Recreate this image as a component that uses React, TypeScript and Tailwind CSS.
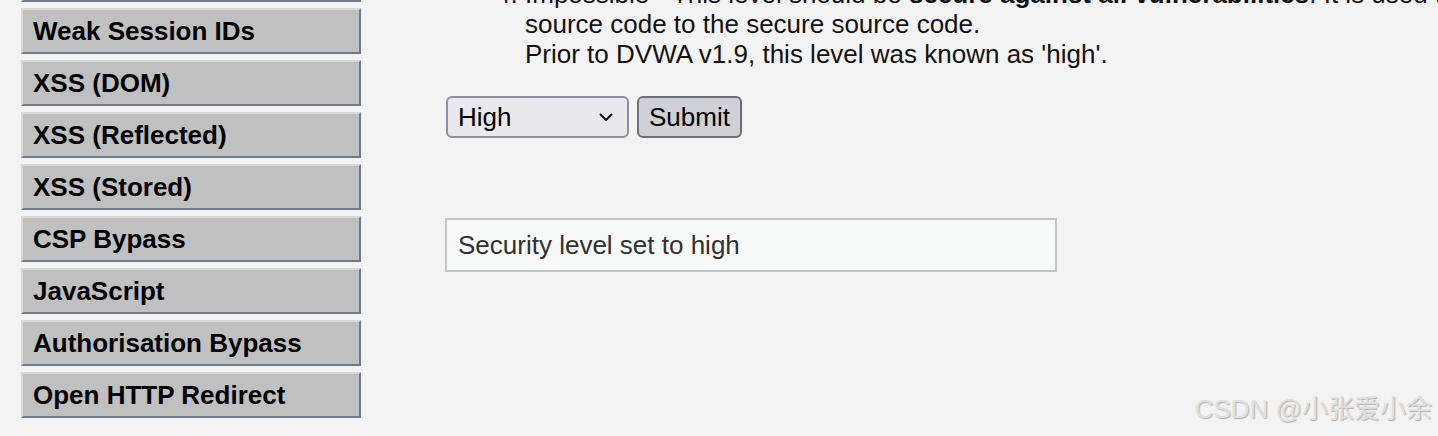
import React from "react";

const items = [
  "Insecure CAPTCHA",
  "Weak Session IDs",
  "XSS (DOM)",
  "XSS (Reflected)",
  "XSS (Stored)",
  "CSP Bypass",
  "JavaScript",
  "Authorisation Bypass",
  "Open HTTP Redirect",
];

export default function App() {
  return (
    <div className="relative w-[1438px] h-[436px] overflow-hidden bg-[#f3f3f3] text-black font-['Liberation_Sans',Arial,sans-serif]">
      <div className="flex items-start">
        <div className="ml-[21px] mt-[-44px] flex w-[340px] shrink-0 flex-col gap-[6px]">
          {items.map((t) => (
            <div
              key={t}
              className="flex h-[46px] items-center border-2 border-t-[#d8d8d8] border-l-[#d8d8d8] border-r-[#6e778c] border-b-[#6e778c] bg-[#c0c0c0] pl-[10px] text-[26px] font-bold leading-none whitespace-nowrap"
            >
              {t}
            </div>
          ))}
        </div>
        <div className="ml-[84px] flex flex-col whitespace-nowrap">
          <ol start={4} className="mt-[-21px] list-decimal pl-[80px] text-[26px] leading-[30px] text-[#111]">
            <li>
              Impossible - This level should be <b>secure against all vulnerabilities</b>. It is used to compare the vulnerable
              <br />
              source code to the secure source code.
              <br />
              Prior to DVWA v1.9, this level was known as 'high'.
            </li>
          </ol>
          <div className="mt-[27px] ml-px flex gap-[8px]">
            <div className="flex h-[42px] w-[183px] items-center justify-between rounded-[6px] border-2 border-[#8f8f9d] bg-[#e9e9ed] pl-[10px] pr-[14px] text-[26px] text-black">
              <span>High</span>
              <svg width="14" height="9" viewBox="0 0 14 9" fill="none">
                <path d="M1.5 1.5 L7 7 L12.5 1.5" stroke="#111" strokeWidth="2" strokeLinecap="round" strokeLinejoin="round" />
              </svg>
            </div>
            <div className="flex h-[42px] w-[105px] items-center rounded-[6px] border-2 border-[#6d6d78] bg-[#d0d0d7] pl-[10px] text-[26px] text-black">
              Submit
            </div>
          </div>
          <div className="mt-[80px] flex h-[54px] w-[612px] items-center border-2 border-[#c4c4c4] bg-[#f8f9f9] pl-[11px] text-[26px] text-[#303030]">
            Security level set to high
          </div>
        </div>
      </div>
      <div className="absolute right-[6px] top-[392px] text-[26px] leading-[34px] text-[#e0e0e0] [text-shadow:1px_1px_1px_#b0b0b0] font-['Liberation_Sans','Noto_Sans_CJK_SC',sans-serif]">
        CSDN @小张爱小余
      </div>
    </div>
  );
}
